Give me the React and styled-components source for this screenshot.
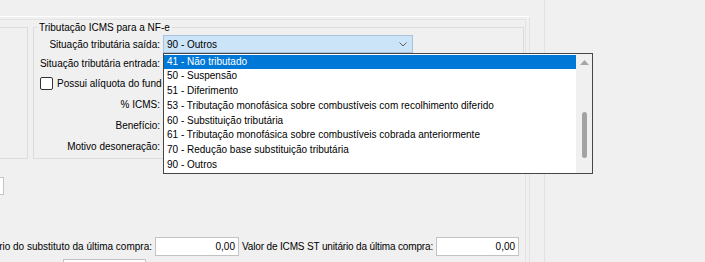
import React from "react";
import styled, { createGlobalStyle } from "styled-components";

const GlobalStyle = createGlobalStyle`
  html, body {
    margin: 0;
    padding: 0;
    background: #f0f0f0;
    overflow: hidden;
  }
`;

const OPTIONS = [
  "41 - Não tributado",
  "50 - Suspensão",
  "51 - Diferimento",
  "53 - Tributação monofásica sobre combustíveis com recolhimento diferido",
  "60 - Substituição tributária",
  "61 - Tributação monofásica sobre combustíveis cobrada anteriormente",
  "70 - Redução base substituição tributária",
  "90 - Outros",
];

export default function App() {
  return (
    <>
      <GlobalStyle />
      <Screen>
        <Workspace>
          <OuterFrame>
            <InnerFrame>
              <TopRow>
                <LeftStub />
                <GroupBox>
                  <Legend>Tributação ICMS para a NF-e</Legend>
                  <FormGrid>
                    <Label>Situação tributária saída:</Label>
                    <ComboWrap>
                      <Combo>
                        <span>90 - Outros</span>
                        <svg width="8" height="5" viewBox="0 0 8 5">
                          <polyline
                            points="0.5,0.5 4,4 7.5,0.5"
                            fill="none"
                            stroke="#5f5f5f"
                            strokeWidth="1"
                          />
                        </svg>
                      </Combo>
                      <DropList>
                        <Items>
                          {OPTIONS.map((opt, i) => (
                            <Item key={opt} $selected={i === 0}>
                              {opt}
                            </Item>
                          ))}
                        </Items>
                        <ScrollBar>
                          <svg width="9" height="5" viewBox="0 0 9 5">
                            <polygon points="0,5 4.5,0 9,5" fill="#a6a6a6" />
                          </svg>
                          <Thumb />
                        </ScrollBar>
                      </DropList>
                    </ComboWrap>

                    <Label>Situação tributária entrada:</Label>
                    <span />

                    <CheckRow>
                      <CheckBox />
                      <CheckText>
                        Possui alíquota do fundo de combate à pobreza
                      </CheckText>
                    </CheckRow>

                    <Label>% ICMS:</Label>
                    <span />
                    <Label>Benefício:</Label>
                    <span />
                    <Label>Motivo desoneração:</Label>
                    <span />
                  </FormGrid>
                </GroupBox>
              </TopRow>

              <StubInput />

              <ValueRow>
                <RightLabel $width={152}>
                  Valor de ICMS ST unitário do substituto da última compra:
                </RightLabel>
                <Field $width={84}>0,00</Field>
                <LeftLabel>Valor de ICMS ST unitário da última compra:</LeftLabel>
                <Field $width={83}>0,00</Field>
              </ValueRow>

              <LastField $width={83} />
            </InnerFrame>
          </OuterFrame>
        </Workspace>
        <RightPane />
      </Screen>
    </>
  );
}

const Screen = styled.div`
  width: 705px;
  height: 262px;
  display: flex;
  overflow: hidden;
  background: #f0f0f0;
  font-family: "Liberation Sans", Arial, sans-serif;
  font-size: 10px;
  color: #000;
`;

const Workspace = styled.div`
  width: 544px;
  display: flex;
  flex-direction: column;
  padding-top: 16px;
  box-sizing: border-box;
`;

const RightPane = styled.div`
  flex: 1;
  border-left: 1px solid #e2e2e2;
`;

const OuterFrame = styled.div`
  width: 530px;
  flex: 1;
  display: flex;
  border-top: 1px solid #ffffff;
  border-right: 1px solid #e2e2e2;
  padding: 2px 3px 0 0;
  box-sizing: border-box;
`;

const InnerFrame = styled.div`
  flex: 1;
  display: flex;
  flex-direction: column;
  border-top: 1px solid #e3e3e3;
  border-right: 1px solid #e3e3e3;
  padding-top: 7px;
`;

const TopRow = styled.div`
  display: flex;
  gap: 5px;
`;

const LeftStub = styled.div`
  width: 28px;
  height: 132px;
  box-sizing: border-box;
  border: 1px solid #dcdcdc;
  border-left: none;
`;

const GroupBox = styled.div`
  position: relative;
  width: 491px;
  height: 132px;
  box-sizing: border-box;
  border: 1px solid #dcdcdc;
  padding-top: 7px;
`;

const Legend = styled.div`
  position: absolute;
  top: -7px;
  left: 3px;
  padding: 0 2px;
  line-height: 14px;
  background: #f0f0f0;
`;

const FormGrid = styled.div`
  display: grid;
  grid-template-columns: 126px 1fr;
  grid-template-rows: 19px 19px 21px 21px 21px 21px;
  column-gap: 3px;
  align-items: center;
`;

const Label = styled.div`
  text-align: right;
  white-space: nowrap;
  line-height: 12px;
`;

const ComboWrap = styled.div`
  position: relative;
  align-self: start;
  width: 250px;
  height: 18px;
`;

const Combo = styled.div`
  height: 18px;
  box-sizing: border-box;
  display: flex;
  align-items: center;
  justify-content: space-between;
  padding: 0 5px 0 3px;
  background: #cce4f7;
  border: 1px solid #a9c3dc;

  svg {
    margin-top: 1px;
  }
`;

const DropList = styled.div`
  position: absolute;
  top: 18px;
  left: 0;
  z-index: 10;
  width: 430px;
  height: 121px;
  box-sizing: border-box;
  display: flex;
  background: #fff;
  border: 1px solid #464646;
`;

const Items = styled.div`
  flex: 1;
  display: flex;
  flex-direction: column;
  padding-top: 0.5px;
`;

const Item = styled.div`
  height: 14.8px;
  line-height: 14.8px;
  padding-left: 3px;
  white-space: nowrap;
  background: ${(p) => (p.$selected ? "#0078d7" : "transparent")};
  color: ${(p) => (p.$selected ? "#fff" : "#000")};
`;

const ScrollBar = styled.div`
  width: 16px;
  background: #f0f0f0;
  display: flex;
  flex-direction: column;
  align-items: center;

  svg {
    margin-top: 6px;
  }
`;

const Thumb = styled.div`
  width: 5px;
  height: 46px;
  margin-top: 47px;
  border-radius: 3px;
  background: #a3a3a3;
`;

const CheckRow = styled.div`
  grid-column: 1 / -1;
  display: flex;
  align-items: center;
  gap: 4px;
  padding-left: 6px;
  white-space: nowrap;
`;

const CheckText = styled.span`
  width: 105px;
  overflow: hidden;
`;

const CheckBox = styled.div`
  width: 13px;
  height: 13px;
  flex: none;
  box-sizing: border-box;
  border: 1px solid #333;
  border-radius: 2px;
  background: #fff;
`;

const StubInput = styled.div`
  width: 20px;
  height: 18px;
  box-sizing: border-box;
  margin: 18px 0 0 -16px;
  background: #fff;
  border: 1px solid #c6c6c6;
`;

const ValueRow = styled.div`
  display: flex;
  align-items: center;
  gap: 3px;
  margin-top: 42px;
`;

const RightLabel = styled.div`
  width: ${(p) => p.$width}px;
  flex: none;
  display: flex;
  justify-content: flex-end;
  white-space: nowrap;
`;

const LeftLabel = styled.div`
  flex: none;
  white-space: nowrap;
  letter-spacing: -0.15px;
`;

const Field = styled.div`
  width: ${(p) => p.$width}px;
  height: 19px;
  flex: none;
  box-sizing: border-box;
  padding-right: 3px;
  display: flex;
  align-items: center;
  justify-content: flex-end;
  background: #fff;
  border: 1px solid #c3c3c3;
`;

const LastField = styled(Field)`
  margin: 3px 0 0 63px;
`;
